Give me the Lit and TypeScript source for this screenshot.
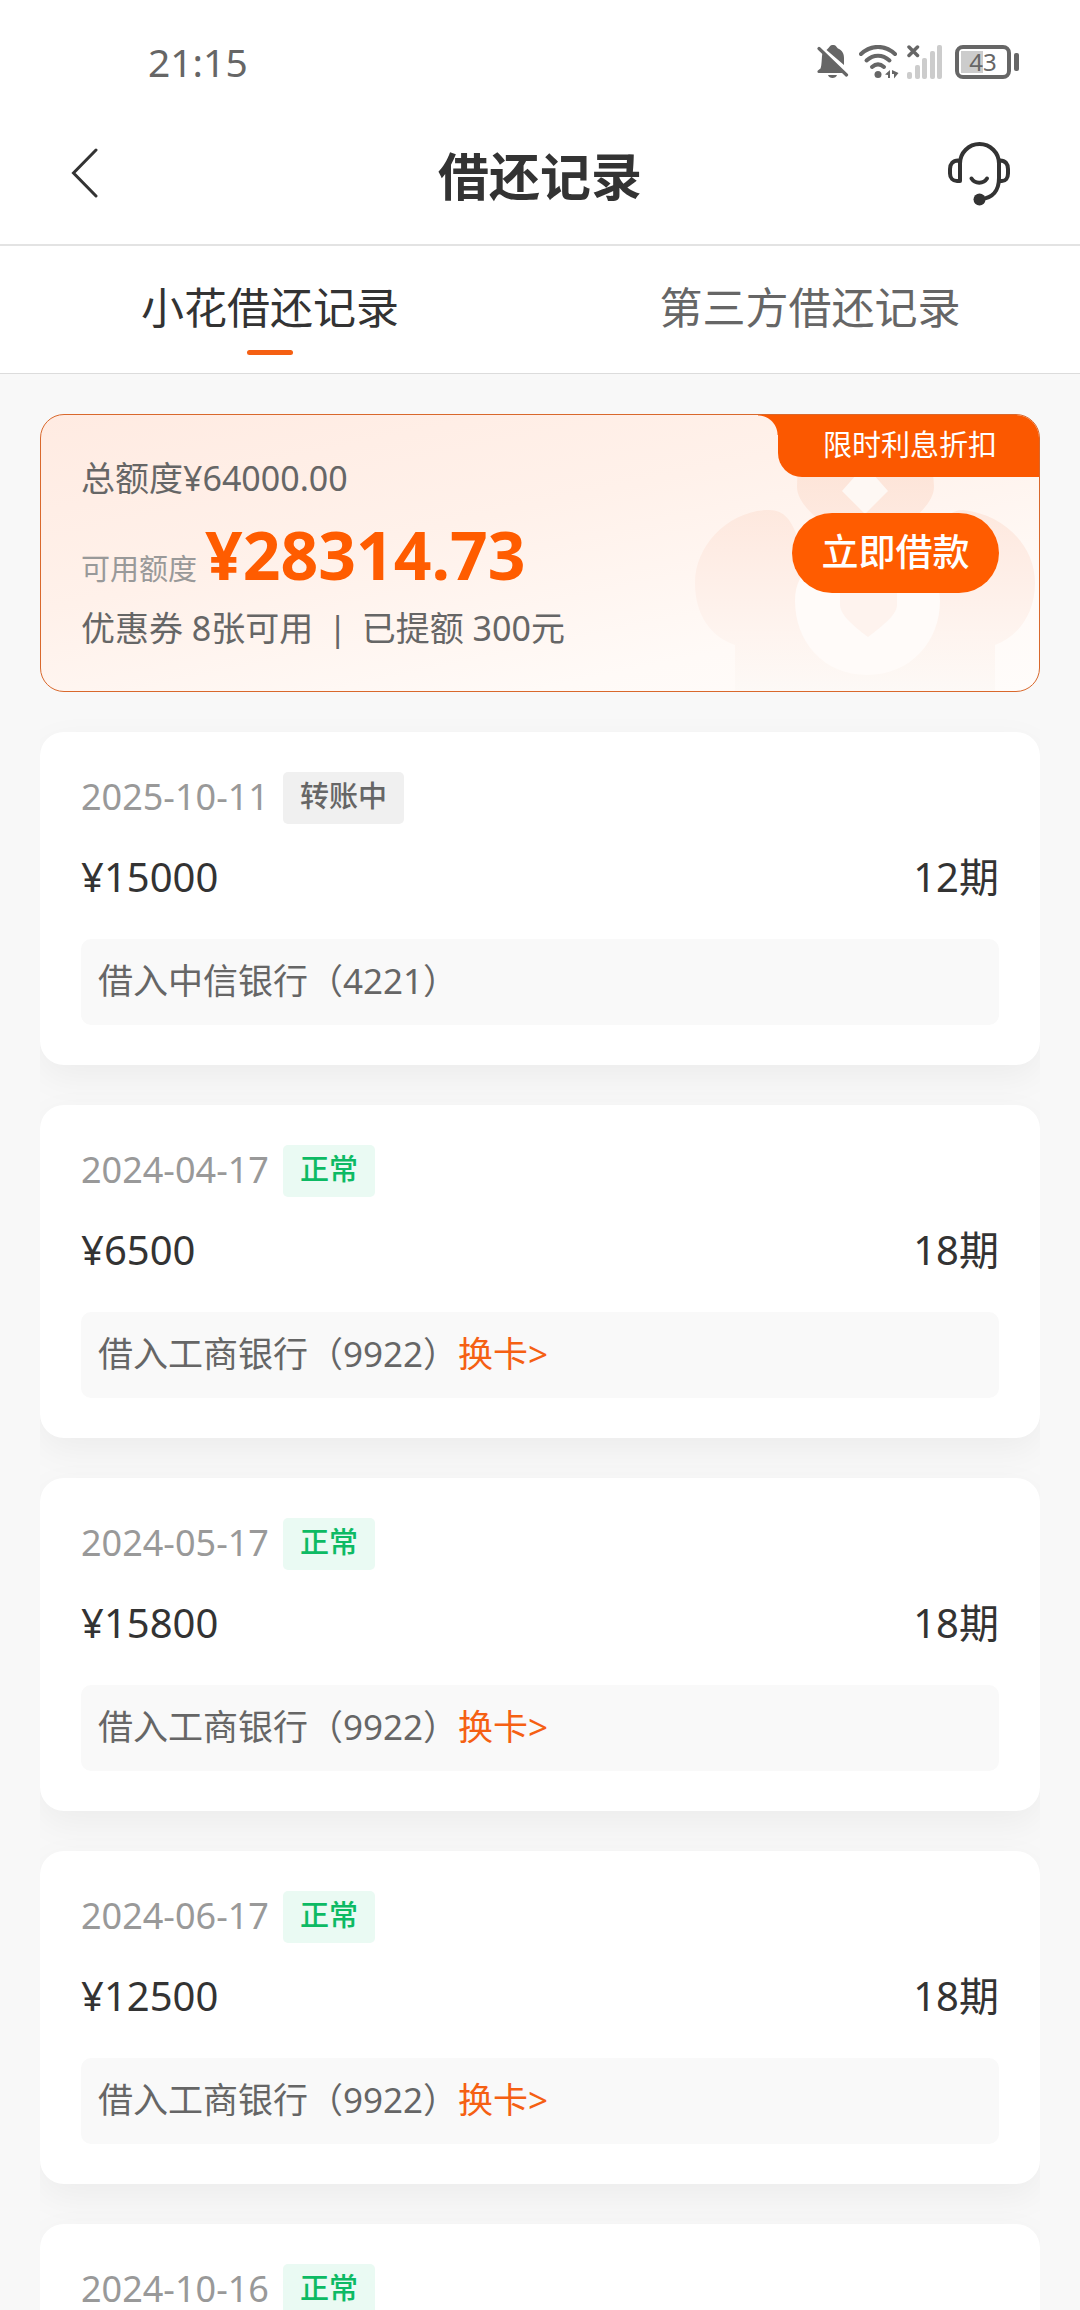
import { LitElement, html, css, svg, nothing } from "lit";
import { customElement, property, state } from "lit/decorators.js";
import { classMap } from "lit/directives/class-map.js";

interface LoanRecord {
  date: string;
  status: string;
  settled: boolean;
  amount?: string;
  term?: string;
  bank?: string;
  canSwitch?: boolean;
}

const RECORDS: LoanRecord[] = [
  { date: "2025-10-11", status: "转账中", settled: false, amount: "¥15000", term: "12期", bank: "借入中信银行（4221）" },
  { date: "2024-04-17", status: "正常", settled: true, amount: "¥6500", term: "18期", bank: "借入工商银行（9922）", canSwitch: true },
  { date: "2024-05-17", status: "正常", settled: true, amount: "¥15800", term: "18期", bank: "借入工商银行（9922）", canSwitch: true },
  { date: "2024-06-17", status: "正常", settled: true, amount: "¥12500", term: "18期", bank: "借入工商银行（9922）", canSwitch: true },
  { date: "2024-10-16", status: "正常", settled: true },
];

const TABS = ["小花借还记录", "第三方借还记录"];

@customElement("status-bar")
class StatusBar extends LitElement {
  static styles = css`
    :host {
      display: flex;
      align-items: center;
      justify-content: space-between;
      height: 108px;
      padding: 16px 61px 0 148px;
      box-sizing: border-box;
      color: #666;
    }
    .time {
      font-size: 39px;
      line-height: 48px;
    }
    .icons {
      display: flex;
      align-items: center;
    }
    .bell {
      margin-right: 10px;
    }
    .wifi {
      margin-right: 8px;
    }
    .signal {
      margin-right: 12px;
    }
    .battery {
      display: flex;
      align-items: center;
      gap: 3px;
    }
    .cell {
      box-sizing: border-box;
      width: 56px;
      height: 34px;
      border: 4px solid #666;
      border-radius: 8px;
      background: linear-gradient(#ccc, #ccc) 2px 2px / 22px 22px no-repeat;
      font-size: 24px;
      line-height: 26px;
      text-align: center;
    }
    .nub {
      width: 5px;
      height: 18px;
      border-radius: 2px;
      background: #666;
    }
  `;

  render() {
    return html`
      <div class="time">21:15</div>
      <div class="icons">
        <svg class="bell" width="32" height="34" viewBox="0 0 32 34" aria-hidden="true">
          <path
            fill="#666"
            d="M11 3.5C12.500 2.500 12.500 0 16 0C19.500 0 19.500 2.500 21 3.500C25.500 5.500 27 9 27 13V20L9.500 5ZM5.500 8L26.500 28H1.500C0 28 0 25.500 1.500 25L3.500 23.500C5 20 4.500 12 5.500 8ZM11 30H20C19 34 12 34 11 30Z"
          />
          <path d="M2 3.500L29.500 30" stroke="#666" stroke-width="3.200" stroke-linecap="round" />
        </svg>
        <svg class="wifi" width="40" height="34" viewBox="0 0 40 34" aria-hidden="true">
          <g fill="none" stroke="#666" stroke-width="4" stroke-linecap="round">
            <path d="M2 9C12 -.5 26 -.5 36 9" />
            <path d="M7.500 15.500C14.500 9 23.500 9 30.500 15.500" />
            <path d="M13 22C17 18.500 21 18.500 25 22" />
          </g>
          <circle cx="19" cy="29.500" r="3.500" fill="#666" />
          <path fill="#666" d="M26 29.500L31 25V33H29V30ZM33 25L39.500 28L35 33.500V29H33Z" />
        </svg>
        <svg class="signal" width="36" height="34" viewBox="0 0 36 34" aria-hidden="true">
          <g fill="#ccc">
            <rect x="0" y="27" width="5" height="7" rx="2" />
            <rect x="8" y="20" width="5" height="14" rx="2" />
            <rect x="15" y="13" width="5" height="21" rx="2" />
            <rect x="23" y="6" width="5" height="28" rx="2" />
            <rect x="30" y="0" width="5" height="34" rx="2" />
          </g>
          <path d="M2 2L10.500 10.500M10.500 2L2 10.500" stroke="#666" stroke-width="3.500" stroke-linecap="round" />
        </svg>
        <div class="battery">
          <div class="cell">43</div>
          <div class="nub"></div>
        </div>
      </div>
    `;
  }
}

@customElement("quota-card")
class QuotaCard extends LitElement {
  static styles = css`
    :host {
      display: block;
    }
    .card {
      position: relative;
      display: flex;
      align-items: center;
      justify-content: space-between;
      box-sizing: border-box;
      min-height: 278px;
      padding: 0 40px;
      overflow: hidden;
      border: 1px solid #d9682c;
      border-radius: 24px;
      background: linear-gradient(168deg, #ffebe2 0%, #fff1ea 40%, #fffaf7 78%, #fffcfa 100%);
      color: #666;
      font-size: 34px;
      line-height: 50px;
    }
    .flower {
      position: absolute;
      right: 0;
      bottom: 0;
    }
    .info {
      position: relative;
    }
    .available {
      display: flex;
      align-items: baseline;
      gap: 8px;
      padding: 10px 0 8px;
      line-height: 82px;
    }
    .label {
      color: #999;
      font-size: 29px;
      line-height: 40px;
    }
    .value {
      color: #ff5c00;
      font-size: 66px;
      font-weight: 700;
    }
    .bar {
      padding: 0 6px;
    }
    .borrow {
      position: relative;
      width: 207px;
      height: 80px;
      padding: 0 0 2px;
      border: 0;
      border-radius: 40px;
      background: #ff5c00;
      color: #fff;
      font-family: inherit;
      font-size: 37px;
      font-weight: 500;
      line-height: 56px;
    }
    .badge {
      position: absolute;
      top: 0;
      right: 0;
      box-sizing: border-box;
      height: 62px;
      padding: 0 42px 0 45px;
      border-radius: 0 0 0 24px;
      background: #fb5800;
      color: #fff;
      font-size: 29px;
      line-height: 60px;
    }
    .badge::before {
      content: "";
      position: absolute;
      top: 0;
      right: 100%;
      width: 20px;
      height: 20px;
      background: radial-gradient(circle at 0 100%, transparent 19px, #fb5800 20px);
    }
  `;

  render() {
    return html`
      <section class="card">
        <svg class="flower" width="344" height="276" viewBox="0 0 344 276" aria-hidden="true">
          <defs>
            <linearGradient id="fade" x1="0" y1="40" x2="0" y2="276" gradientUnits="userSpaceOnUse">
              <stop offset="0" stop-color="#fde3d6" />
              <stop offset=".4" stop-color="#feece4" />
              <stop offset=".75" stop-color="#fef4ef" />
              <stop offset="1" stop-color="#fdf9f6" />
            </linearGradient>
          </defs>
          ${svg`
            <path fill="#fef8f4" d="M170 46L144 76L170 106L196 76Z" />
            <path fill="url(#fade)" fill-rule="evenodd"
              d="M102 72C102 30 131 10 170 10C210 10 239 30 239 72C239 86 223 102 205 114H136C118 102 102 86 102 72ZM170 50L147 76L170 99L193 76Z" />
            <path fill="#fffbf9" d="M100 186C100 226 128 260 172 260C216 260 245 226 245 186C245 150 216 140 172 140C128 140 100 150 100 186Z" />
            <path fill="url(#fade)" fill-rule="evenodd"
              d="M74 95C90 95 97 106 104 126H240C246 106 254 95 268 95C308 99 340 130 340 168C340 200 322 222 300 230V276H40V230C16 222 0 200 0 168C0 130 34 95 74 95ZM100 186C100 226 128 260 172 260C216 260 245 226 245 186C245 150 216 140 172 140C128 140 100 150 100 186Z" />
            <path fill="#fef3ee" d="M145 170H202V190C202 200 186 212 173 222C160 212 145 200 145 190Z" />
          `}
        </svg>
        <div class="info">
          <div>总额度¥64000.00</div>
          <div class="available">
            <span class="label">可用额度</span>
            <span class="value">¥28314.73</span>
          </div>
          <div>优惠券 8张可用 <span class="bar">|</span> 已提额 300元</div>
        </div>
        <button class="borrow" type="button">立即借款</button>
        <div class="badge">限时利息折扣</div>
      </section>
    `;
  }
}

@customElement("record-card")
class RecordCard extends LitElement {
  @property({ attribute: false }) record!: LoanRecord;

  static styles = css`
    :host {
      display: block;
    }
    .card {
      box-sizing: border-box;
      min-height: 333px;
      padding: 40px 41px;
      border-radius: 24px;
      background: #fff;
      box-shadow: 0 12px 36px rgba(0, 0, 0, 0.05);
    }
    .head {
      display: flex;
      align-items: center;
      gap: 14px;
      height: 52px;
    }
    .date {
      padding-bottom: 2px;
      color: #999;
      font-size: 36px;
      line-height: 48px;
    }
    .tag {
      padding: 0 17px 4px;
      border-radius: 5px;
      background: #f0f0f0;
      color: #666;
      font-size: 29px;
      font-weight: 500;
      line-height: 48px;
    }
    .tag.ok {
      background: #eafaf3;
      color: #0dba64;
    }
    .main {
      display: flex;
      justify-content: space-between;
      margin: 25px 0 34px;
      color: #333;
      font-size: 40px;
      line-height: 56px;
    }
    .bank {
      padding: 17px 17px 19px;
      border-radius: 10px;
      background: #f9f9f9;
      color: #666;
      font-size: 35px;
      line-height: 50px;
    }
    .switch {
      color: #f56013;
      text-decoration: none;
    }
  `;

  render() {
    const r = this.record;
    return html`
      <article class="card">
        <div class="head">
          <time class="date">${r.date}</time>
          <span class=${classMap({ tag: true, ok: r.settled })}>${r.status}</span>
        </div>
        ${r.amount
          ? html`
              <div class="main"><span>${r.amount}</span><span>${r.term}</span></div>
              <div class="bank">${r.bank}${r.canSwitch ? html`<a class="switch" href="#card">换卡&gt;</a>` : nothing}</div>
            `
          : nothing}
      </article>
    `;
  }
}

@customElement("app-root")
class AppRoot extends LitElement {
  @state() private active = 0;

  static styles = css`
    :host {
      display: flex;
      flex-direction: column;
      height: 100vh;
      background: #f8f8f8;
      font-family: "Noto Sans", "Noto Sans CJK SC", sans-serif;
    }
    .top {
      background: #fff;
    }
    .header {
      display: grid;
      grid-template-columns: 1fr auto 1fr;
      align-items: center;
      height: 136px;
      padding: 0 68px;
      border-bottom: 2px solid #e3e3e3;
    }
    .title {
      margin: 0;
      color: #333;
      font-size: 51px;
      font-weight: 700;
      line-height: 72px;
    }
    .icon {
      display: flex;
      justify-self: start;
      padding: 0 0 6px;
      border: 0;
      background: none;
    }
    .icon.end {
      justify-self: end;
      padding: 0 0 4px;
    }
    .tabs {
      display: grid;
      grid-template-columns: 1fr 1fr;
      border-bottom: 1px solid #dcdcdc;
    }
    .tab {
      display: flex;
      flex-direction: column;
      align-items: center;
      gap: 10px;
      padding: 30px 0 18px;
      border: 0;
      background: none;
      color: #666;
      font-family: inherit;
      font-size: 43px;
      line-height: 64px;
    }
    .tab::after {
      content: "";
      width: 46px;
      height: 5px;
      border-radius: 3px;
    }
    .tab.active {
      color: #333;
    }
    .tab.active::after {
      background: #f56013;
    }
    .content {
      flex: 1;
      min-height: 0;
      padding: 40px 40px 0;
      overflow-y: auto;
      scrollbar-width: none;
    }
    .list {
      display: flex;
      flex-direction: column;
      gap: 40px;
      padding: 40px 0;
      overflow: hidden;
    }
  `;

  render() {
    return html`
      <div class="top">
        <status-bar></status-bar>
        <header class="header">
          <button class="icon" type="button" aria-label="返回">
            <svg width="32" height="50" viewBox="0 0 32 50" fill="none" stroke="#333" stroke-width="3" stroke-linecap="round">
              <path d="M28 2L5.500 25L28 48" />
            </svg>
          </button>
          <h1 class="title">借还记录</h1>
          <button class="icon end" type="button" aria-label="客服">
            <svg width="64" height="64" viewBox="0 0 64 64" fill="none" stroke="#333" stroke-width="4" stroke-linecap="round">
              <path d="M12 21.500A19.500 19.500 0 0 1 51 21.500V36C51 48 45 56 33 57" />
              <path d="M12 19V39H9C5 39 2 36 2 31.500V27C2 22 5 18.500 10 18.500" stroke-linejoin="round" />
              <path d="M51 39H54C57.500 39 60 36 60 31.500V27C60 22 57.500 18.500 52 18.500" />
              <path d="M23.500 36.500C27 42 35.500 42 39 36.500" />
              <circle cx="31.500" cy="57.500" r="6" fill="#333" stroke="none" />
            </svg>
          </button>
        </header>
        <div class="tabs" role="tablist">
          ${TABS.map(
            (label, i) => html`
              <button
                class=${classMap({ tab: true, active: i === this.active })}
                type="button"
                role="tab"
                aria-selected=${i === this.active}
                @click=${() => (this.active = i)}
              >
                ${label}
              </button>
            `
          )}
        </div>
      </div>
      <main class="content">
        <quota-card></quota-card>
        <div class="list">${RECORDS.map((r) => html`<record-card .record=${r}></record-card>`)}</div>
      </main>
    `;
  }
}
